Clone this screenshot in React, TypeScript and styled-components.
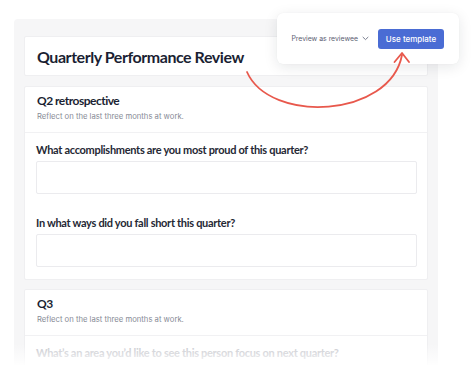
import React from "react";
import styled, { createGlobalStyle } from "styled-components";

const Global = createGlobalStyle`
  html, body { margin: 0; padding: 0; background: #ffffff; }
  body { font-family: "Inter", "Liberation Sans", sans-serif; }
  * { box-sizing: border-box; }
`;

const Stage = styled.div`
  position: relative;
  width: 474px;
  height: 379px;
  overflow: hidden;
  background: #ffffff;
`;

const Panel = styled.div`
  margin: 19px 0 0 14px;
  width: 424px;
  height: 346px;
  background: #f6f6f7;
  border-radius: 4px 4px 0 0;
  padding: 17px 10px 0;
  display: flex;
  flex-direction: column;
  gap: 10px;
  overflow: hidden;
`;

const Card = styled.div<{ $tight?: boolean }>`
  background: #ffffff;
  border: 1px solid #efeff1;
  border-radius: 2px;
  flex-shrink: 0;
  margin-top: ${(p) => (p.$tight ? "-1px" : "0")};
`;

const TitleCard = styled(Card)`
  height: 40px;
  display: flex;
  align-items: center;
  padding-left: 12px;
`;

const Title = styled.h1`
  margin: 0;
  font-family: "Lato", "Liberation Sans", sans-serif;
  font-weight: 700;
  font-size: 16px;
  color: #1b1f33;
  letter-spacing: -0.45px;
`;

const SectionHeader = styled.div`
  padding: 7px 12px 9px;
  border-bottom: 1px solid #f1f1f3;
`;

const SectionTitle = styled.div`
  font-family: "Lato", "Liberation Sans", sans-serif;
  font-weight: 700;
  font-size: 12px;
  line-height: 14px;
  color: #1b1f33;
  letter-spacing: -0.5px;
`;

const SectionDesc = styled.div`
  margin-top: 3px;
  font-size: 7.7px;
  line-height: 12px;
  color: #878b96;
`;

const SectionBody = styled.div`
  padding: 10px 10px 12px 11px;
  display: flex;
  flex-direction: column;
`;

const QuestionLabel = styled.div<{ $faded?: boolean; $first?: boolean }>`
  margin-top: ${(p) => (p.$first ? "0" : "22px")};
  font-family: "Lato", "Liberation Sans", sans-serif;
  font-weight: 700;
  font-size: 11px;
  line-height: 14px;
  letter-spacing: -0.3px;
  color: ${(p) => (p.$faded ? "#c4c5cb" : "#252834")};
`;

const AnswerBox = styled.div`
  margin-top: 4px;
  height: 33px;
  border: 1px solid #ebebee;
  border-radius: 2px;
  background: #ffffff;
`;

const Fade = styled.div`
  position: absolute;
  left: 0;
  right: 0;
  top: 344px;
  height: 23px;
  background: linear-gradient(to bottom, rgba(255, 255, 255, 0), rgba(255, 255, 255, 0.6) 60%, #ffffff);
  pointer-events: none;
`;

const Popover = styled.div`
  position: absolute;
  left: 277px;
  top: 13px;
  width: 182px;
  height: 51px;
  background: #ffffff;
  border-radius: 6px;
  box-shadow: 0 3px 14px rgba(20, 25, 40, 0.1), 0 0 1px rgba(20, 25, 40, 0.08);
  display: flex;
  align-items: center;
  justify-content: flex-end;
  padding-right: 15px;
  gap: 9px;
`;

const PreviewLink = styled.div`
  display: flex;
  align-items: center;
  gap: 4px;
  font-size: 6.9px;
  color: #5b6072;
`;

const PrimaryButton = styled.button`
  height: 20px;
  width: 66px;
  border: none;
  border-radius: 3px;
  background: #4a6cd4;
  color: #ffffff;
  font-family: "Inter", "Liberation Sans", sans-serif;
  font-size: 8px;
  font-weight: 500;
  padding: 0;
  cursor: pointer;
`;

const ArrowLayer = styled.svg`
  position: absolute;
  left: 0;
  top: 0;
  pointer-events: none;
`;

export default function App() {
  return (
    <>
      <Global />
      <Stage>
        <Panel>
          <TitleCard>
            <Title>Quarterly Performance Review</Title>
          </TitleCard>
          <Card>
            <SectionHeader>
              <SectionTitle>Q2 retrospective</SectionTitle>
              <SectionDesc>Reflect on the last three months at work.</SectionDesc>
            </SectionHeader>
            <SectionBody>
              <QuestionLabel $first>What accomplishments are you most proud of this quarter?</QuestionLabel>
              <AnswerBox />
              <QuestionLabel>In what ways did you fall short this quarter?</QuestionLabel>
              <AnswerBox />
            </SectionBody>
          </Card>
          <Card $tight>
            <SectionHeader>
              <SectionTitle>Q3</SectionTitle>
              <SectionDesc>Reflect on the last three months at work.</SectionDesc>
            </SectionHeader>
            <SectionBody>
              <QuestionLabel $first $faded>
                What’s an area you’d like to see this person focus on next quarter?
              </QuestionLabel>
            </SectionBody>
          </Card>
        </Panel>
        <Fade />
        <Popover>
          <PreviewLink>
            Preview as reviewee
            <svg width="7" height="5" viewBox="0 0 7 5">
              <path d="M1 1.2 L3.5 3.6 L6 1.2" fill="none" stroke="#6b7082" strokeWidth="0.9" strokeLinecap="round" strokeLinejoin="round" />
            </svg>
          </PreviewLink>
          <PrimaryButton>Use template</PrimaryButton>
        </Popover>
        <ArrowLayer width="474" height="379" viewBox="0 0 474 379">
          <path d="M247 72 C270 124 390 118 402 55" fill="none" stroke="#e8584c" strokeWidth="1.8" strokeLinecap="round" />
          <path d="M394.5 62 L402 53 L409 62" fill="none" stroke="#e8584c" strokeWidth="1.8" strokeLinecap="round" strokeLinejoin="round" />
        </ArrowLayer>
      </Stage>
    </>
  );
}
